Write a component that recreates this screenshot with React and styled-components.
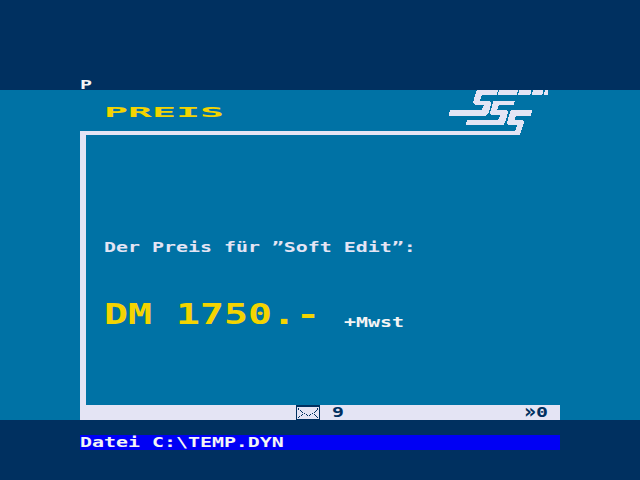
import React from "react";
import styled, { createGlobalStyle } from "styled-components";

const navy = "#003060";
const teal = "#0072a5";
const pale = "#e4e4f4";
const yellow = "#f4d400";

const GlobalStyle = createGlobalStyle`
  body { margin: 0; background: ${navy}; overflow: hidden; }
`;

const Screen = styled.main`
  width: 640px;
  height: 480px;
  display: grid;
  grid-template-rows: 90px 330px 60px;
  background: ${navy};
`;

/* Wide terminal lettering: the glyphs are stretched to fill each cell. */
const Label = styled.span`
  display: block;
  width: max-content;
  font: bold ${(p) => p.$size || 13.7}px "DejaVu Sans Mono", monospace;
  line-height: ${(p) => p.$line || 15}px;
  white-space: pre;
  color: ${(p) => p.$color || "#f4f4f4"};
  transform: scaleX(${(p) => (p.$cell || 12) / ((p.$size || 13.7) * 0.602)});
  transform-origin: left top;
`;

const TopBar = styled.header`
  display: flex;
  align-items: flex-end;
  padding-left: 80px;
`;

const Page = styled.section`
  display: grid;
  grid-template-rows: 45px 270px 15px;
  padding: 0 80px;
  background: ${teal};
`;

const Heading = styled.div`
  display: flex;
  justify-content: space-between;
`;

const TitleColumn = styled.div`
  flex: 1;
  display: flex;
  flex-direction: column;
  justify-content: space-between;
`;

const Title = styled.div`
  padding: 15px 0 0 24px;
`;

const Rule = styled.div`
  height: 4px;
  background: ${pale};
`;

const LogoArt = styled.svg`
  display: block;
  width: 120px;
  height: 45px;
  flex: none;
`;

const Content = styled.div`
  display: flex;
  flex-direction: column;
  border-left: 6px solid ${pale};
  padding: 105px 0 0 18px;
`;

const PriceRow = styled.div`
  display: grid;
  grid-template-columns: 240px 1fr;
  margin-top: 43px;
`;

const Suffix = styled.div`
  padding-top: 17px;
`;

const StatusBar = styled.footer`
  display: grid;
  grid-template-columns: 36px 192px 12px 24px;
  padding-left: 216px;
  background: ${pale};
`;

const EnvelopeArt = styled.svg`
  display: block;
  width: 24px;
  height: 15px;
`;

const FileArea = styled.div`
  padding: 15px 80px 0;
`;

const FileLine = styled.div`
  height: 15px;
  background: #0000f4;
`;

const Logo = () => (
  <LogoArt viewBox="0 0 360 135" shapeRendering="crispEdges" fill={pale}>
    <path d="M112 0H174L170 15H125L120 33H150L154 39L147 66L141 75L137 78H27V72L30 60H125L132 45H105L99 39L103 24L108 6Z" />
    <path d="M177 0H234L231 15H174ZM239 0H274L271 15H234ZM279 0H310L307 15H276ZM315 0H324V15H312Z" />
    <path d="M160 33H225L221 45H177L172 60H200L204 66L196 96L190 105H78L81 90H174L181 75H154L150 69Z" />
    <path d="M213 60H276L273 78H228L223 90H249L252 96L240 135H0V123H226L232 105H206L201 99L207 75Z" />
  </LogoArt>
);

const Envelope = () => (
  <EnvelopeArt viewBox="0 0 24 15" shapeRendering="crispEdges">
    <path fill={navy} d="M0 0H24V15H0Z" />
    <path fill={pale} d="M1 2H23V14H1Z" />
    <path
      fill={navy}
      d="M2 3h1v2H2zM4 5h1v1H4zM5 6h1v1H5zM6 7h1v1H6zM8 8h1v1H8zM10 9h1v1H10zM11 10h1v1H11zM13 10h1v1H13zM14 9h1v1H14zM16 8h1v1H16zM18 7h1v1H18zM19 6h1v1H19zM20 5h1v1H20zM21 3h1v2H21zM6 9h1v1H6zM5 10h1v1H5zM3 11h1v1H3zM2 12h1v1H2zM18 9h1v1H18zM19 10h1v1H19zM20 11h1v1H20zM21 12h1v1H21z"
    />
  </EnvelopeArt>
);

export default function App() {
  return (
    <>
      <GlobalStyle />
      <Screen>
        <TopBar>
          <Label $size={12.3} $line={10}>P</Label>
        </TopBar>
        <Page>
          <Heading>
            <TitleColumn>
              <Title>
                <Label $color={yellow} $cell={24}>PREIS</Label>
              </Title>
              <Rule />
            </TitleColumn>
            <Logo />
          </Heading>
          <Content>
            <Label $color={pale}>Der Preis für ”Soft Edit”:</Label>
            <PriceRow>
              <Label $size={28.8} $cell={24} $line={32} $color={yellow}>DM 1750.-</Label>
              <Suffix>
                <Label>+Mwst</Label>
              </Suffix>
            </PriceRow>
          </Content>
          <StatusBar>
            <Envelope />
            <Label $color={navy}>9</Label>
            <Label $color={navy} $size={19} $line={13}>»</Label>
            <Label $color={navy}>0</Label>
          </StatusBar>
        </Page>
        <FileArea>
          <FileLine>
            <Label>Datei C:\TEMP.DYN</Label>
          </FileLine>
        </FileArea>
      </Screen>
    </>
  );
}
